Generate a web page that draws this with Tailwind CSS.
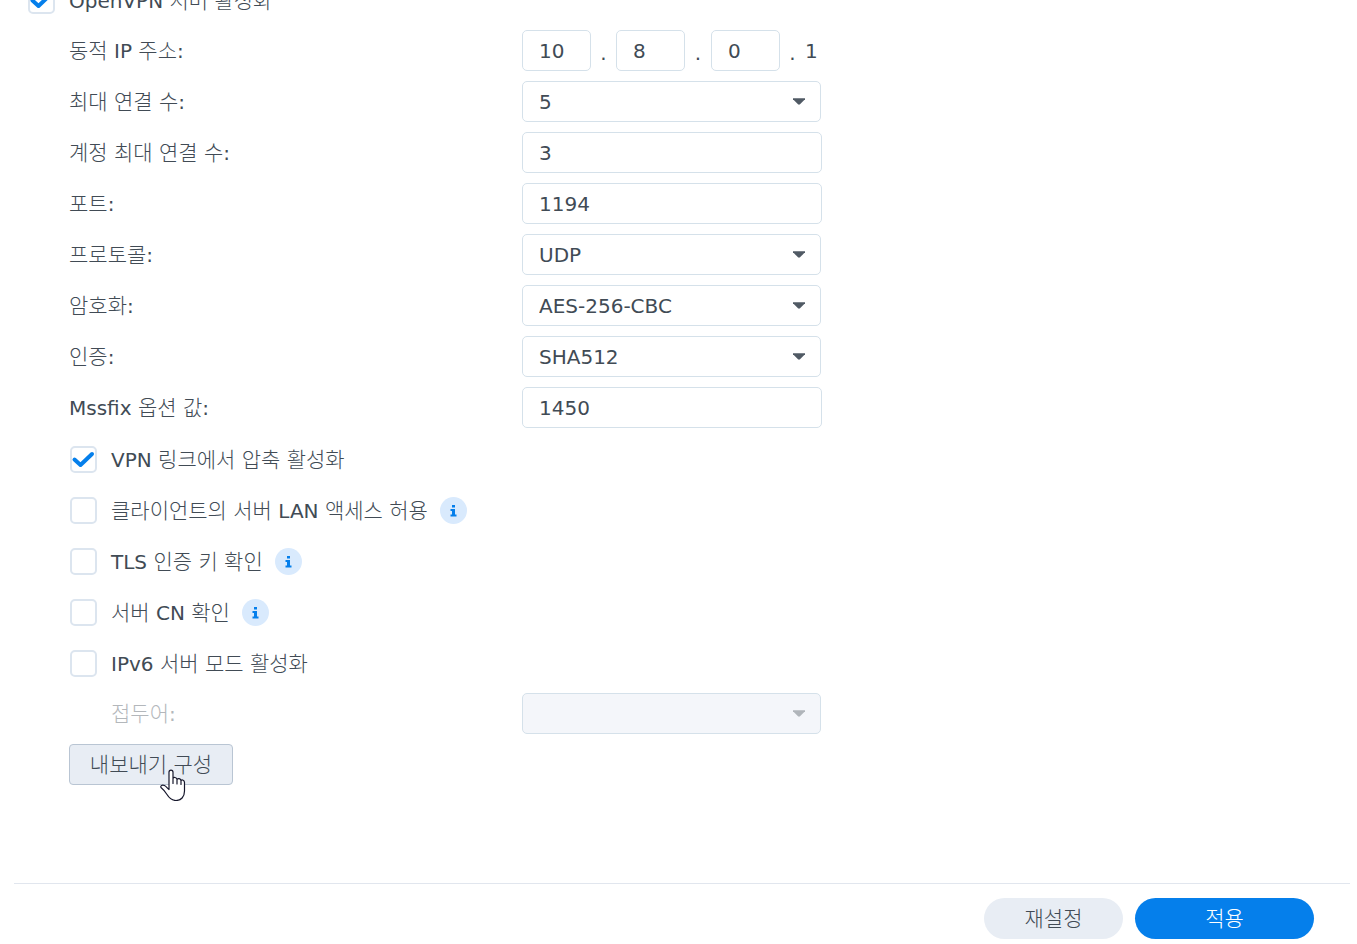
<!DOCTYPE html>
<html lang="ko">
<head>
<meta charset="utf-8">
<meta name="viewport" content="width=device-width, initial-scale=1">
<title>OpenVPN</title>
<script src="https://cdn.jsdelivr.net/npm/@tailwindcss/browser@4"></script>
</head>
<body class="bg-white text-[#414b55] font-['DejaVu_Sans','Noto_Sans_CJK_KR',sans-serif] text-[20px] leading-[24px]">
<svg class="hidden" aria-hidden="true">
  <symbol id="caret" viewBox="0 0 12 7"><path d="M0 .3h12v1L7 6.3q-1 .8-2 0L0 1.3z" fill="currentColor"/></symbol>
  <symbol id="check" viewBox="0 0 27 27"><path d="M4.5 13.5l6 5.5L22 8" fill="none" stroke="#057feb" stroke-width="4" stroke-linecap="round" stroke-linejoin="round"/></symbol>
  <symbol id="info" viewBox="0 0 27 27"><circle cx="13.5" cy="13.5" r="13.5" fill="#d9eafd"/><path d="M12 8h3v2.500h-3zM10.500 12H15v5.500h1.500V19.500h-6V17.500H12V14h-1.500z" fill="#057feb"/></symbol>
</svg>
<div class="flex h-screen flex-col overflow-hidden">
  <main class="min-h-0 flex-1 overflow-hidden">
    <form id="vpn" class="-mt-[21px] flex flex-col gap-[10px] pl-[69px]">
      <div class="-ml-[41px] flex h-[41px] items-center pt-0.5">
        <label class="flex items-center gap-[14px]"><span class="relative size-[27px]"><input type="checkbox" checked class="peer block size-[27px] appearance-none rounded-[5px] border-2 border-[#dce5ef] bg-white"><svg class="pointer-events-none absolute inset-0 hidden size-[27px] peer-checked:block"><use href="#check"/></svg></span><span>OpenVPN <span class="text-[21px] font-light">서버</span> <span class="text-[21px] font-light">활성화</span></span></label>
      </div>
      <div class="flex h-[41px] items-center">
        <label for="ip1" class="w-[453px]"><span class="text-[21px] font-light">동적</span> IP <span class="text-[21px] font-light">주소</span>:</label>
        <div class="flex items-center">
          <input id="ip1" value="10" class="h-[41px] w-[69px] rounded-[5px] border border-[#d5e1ea] px-4">
          <span class="w-[25px] pt-1 text-center">.</span>
          <input aria-label="8" value="8" class="h-[41px] w-[69px] rounded-[5px] border border-[#d5e1ea] px-4">
          <span class="w-[26px] pt-1 text-center">.</span>
          <input aria-label="0" value="0" class="h-[41px] w-[69px] rounded-[5px] border border-[#d5e1ea] px-4">
          <span class="w-[25px] pt-1 text-center">.</span>
          <span>1</span>
        </div>
      </div>
      <div class="flex h-[41px] items-center">
        <label for="max" class="w-[453px]"><span class="text-[21px] font-light">최대</span> <span class="text-[21px] font-light">연결</span> <span class="text-[21px] font-light">수</span>:</label>
        <div class="relative"><select id="max" class="h-[41px] w-[299px] appearance-none rounded-[5px] border border-[#d5e1ea] bg-white px-4"><option>5</option></select><svg class="pointer-events-none absolute top-[17px] right-4 h-[7px] w-3 text-[#505a64]"><use href="#caret"/></svg></div>
      </div>
      <div class="flex h-[41px] items-center">
        <label for="acc" class="w-[453px]"><span class="text-[21px] font-light">계정</span> <span class="text-[21px] font-light">최대</span> <span class="text-[21px] font-light">연결</span> <span class="text-[21px] font-light">수</span>:</label>
        <input id="acc" value="3" class="h-[41px] w-[300px] rounded-[5px] border border-[#d5e1ea] px-4">
      </div>
      <div class="flex h-[41px] items-center">
        <label for="port" class="w-[453px]"><span class="text-[21px] font-light">포트</span>:</label>
        <input id="port" value="1194" class="h-[41px] w-[300px] rounded-[5px] border border-[#d5e1ea] px-4">
      </div>
      <div class="flex h-[41px] items-center">
        <label for="proto" class="w-[453px]"><span class="text-[21px] font-light">프로토콜</span>:</label>
        <div class="relative"><select id="proto" class="h-[41px] w-[299px] appearance-none rounded-[5px] border border-[#d5e1ea] bg-white px-4"><option>UDP</option></select><svg class="pointer-events-none absolute top-[17px] right-4 h-[7px] w-3 text-[#505a64]"><use href="#caret"/></svg></div>
      </div>
      <div class="flex h-[41px] items-center">
        <label for="enc" class="w-[453px]"><span class="text-[21px] font-light">암호화</span>:</label>
        <div class="relative"><select id="enc" class="h-[41px] w-[299px] appearance-none rounded-[5px] border border-[#d5e1ea] bg-white px-4"><option>AES-256-CBC</option></select><svg class="pointer-events-none absolute top-[17px] right-4 h-[7px] w-3 text-[#505a64]"><use href="#caret"/></svg></div>
      </div>
      <div class="flex h-[41px] items-center">
        <label for="auth" class="w-[453px]"><span class="text-[21px] font-light">인증</span>:</label>
        <div class="relative"><select id="auth" class="h-[41px] w-[299px] appearance-none rounded-[5px] border border-[#d5e1ea] bg-white px-4"><option>SHA512</option></select><svg class="pointer-events-none absolute top-[17px] right-4 h-[7px] w-3 text-[#505a64]"><use href="#caret"/></svg></div>
      </div>
      <div class="flex h-[41px] items-center">
        <label for="mss" class="w-[453px]">Mssfix <span class="text-[21px] font-light">옵션</span> <span class="text-[21px] font-light">값</span>:</label>
        <input id="mss" value="1450" class="h-[41px] w-[300px] rounded-[5px] border border-[#d5e1ea] px-4">
      </div>
      <div class="flex h-[41px] items-center pt-0.5 pl-px">
        <label class="flex items-center gap-[14px]"><span class="relative size-[27px]"><input type="checkbox" checked class="peer block size-[27px] appearance-none rounded-[5px] border-2 border-[#dce5ef] bg-white"><svg class="pointer-events-none absolute inset-0 hidden size-[27px] peer-checked:block"><use href="#check"/></svg></span><span>VPN <span class="text-[21px] font-light">링크에서</span> <span class="text-[21px] font-light">압축</span> <span class="text-[21px] font-light">활성화</span></span></label>
      </div>
      <div class="flex h-[41px] items-center gap-3 pt-0.5 pl-px">
        <label class="flex items-center gap-[14px]"><input type="checkbox" class="block size-[27px] appearance-none rounded-[5px] border-2 border-[#dce5ef] bg-white"><span><span class="text-[21px] font-light">클라이언트의</span> <span class="text-[21px] font-light">서버</span> LAN <span class="text-[21px] font-light">액세스</span> <span class="text-[21px] font-light">허용</span></span></label>
        <button type="button" aria-label="i"><svg class="block size-[27px]"><use href="#info"/></svg></button>
      </div>
      <div class="flex h-[41px] items-center gap-3 pt-0.5 pl-px">
        <label class="flex items-center gap-[14px]"><input type="checkbox" class="block size-[27px] appearance-none rounded-[5px] border-2 border-[#dce5ef] bg-white"><span>TLS <span class="text-[21px] font-light">인증</span> <span class="text-[21px] font-light">키</span> <span class="text-[21px] font-light">확인</span></span></label>
        <button type="button" aria-label="i"><svg class="block size-[27px]"><use href="#info"/></svg></button>
      </div>
      <div class="flex h-[41px] items-center gap-3 pt-0.5 pl-px">
        <label class="flex items-center gap-[14px]"><input type="checkbox" class="block size-[27px] appearance-none rounded-[5px] border-2 border-[#dce5ef] bg-white"><span><span class="text-[21px] font-light">서버</span> CN <span class="text-[21px] font-light">확인</span></span></label>
        <button type="button" aria-label="i"><svg class="block size-[27px]"><use href="#info"/></svg></button>
      </div>
      <div class="flex h-[41px] items-center pt-0.5 pl-px">
        <label class="flex items-center gap-[14px]"><input type="checkbox" class="block size-[27px] appearance-none rounded-[5px] border-2 border-[#dce5ef] bg-white"><span>IPv6 <span class="text-[21px] font-light">서버</span> <span class="text-[21px] font-light">모드</span> <span class="text-[21px] font-light">활성화</span></span></label>
      </div>
      <div class="flex h-[41px] items-center">
        <label for="prefix" class="w-[453px] pl-[42px] text-[#b3b7bb]"><span class="text-[21px] font-light">접두어</span>:</label>
        <div class="relative"><select id="prefix" disabled class="h-[41px] w-[299px] appearance-none rounded-[5px] border border-[#d5e1ea] bg-[#f4f6fa] px-4"><option></option></select><svg class="pointer-events-none absolute top-[17px] right-4 h-[7px] w-3 text-[#b0b5ba]"><use href="#caret"/></svg></div>
      </div>
      <div class="relative flex h-[41px]">
        <button type="button" class="h-[41px] w-[164px] rounded-[4px] border border-[#b9c5d3] bg-[#e8edf4]"><span class="text-[21px] font-light">내보내기</span> <span class="text-[21px] font-light">구성</span></button>
        <svg class="pointer-events-none absolute top-[25px] left-[91px] h-8 w-[26px]" viewBox="0 0 26 32"><path d="M9 18.500V3.200C9 .300 13 .300 13 3.200V9.500C13.500 8 16.500 8 17 10.500C18 9 20.500 9.500 21 11.500C22 10.500 24.500 11 24.500 13.500V22C24.500 28 21 31.500 16 31.500C11.500 31.500 9.500 29.500 7 25.500C5 22.500 3.500 20.500 1.500 19C-.5 17 2 15.500 4.500 16.500C6.500 17.500 7.500 19.500 9 20.500V18.500M13 9V14.500M17 10.500V15M21 11.500V15.500" fill="#fff" stroke="#15162b" stroke-width="1.200" stroke-linejoin="round" stroke-linecap="round"/></svg>
      </div>
    </form>
  </main>
  <footer class="mr-[7px] ml-[14px] flex shrink-0 justify-end gap-3 border-t border-[#e1e6ee] pt-[14px] pr-9 pb-[5px] text-[21px] font-light">
    <button type="reset" form="vpn" class="h-[41px] w-[139px] rounded-full bg-[#e8edf4]">재설정</button>
    <button type="submit" form="vpn" class="h-[41px] w-[179px] rounded-full bg-[#057feb] text-white">적용</button>
  </footer>
</div>
</body>
</html>
